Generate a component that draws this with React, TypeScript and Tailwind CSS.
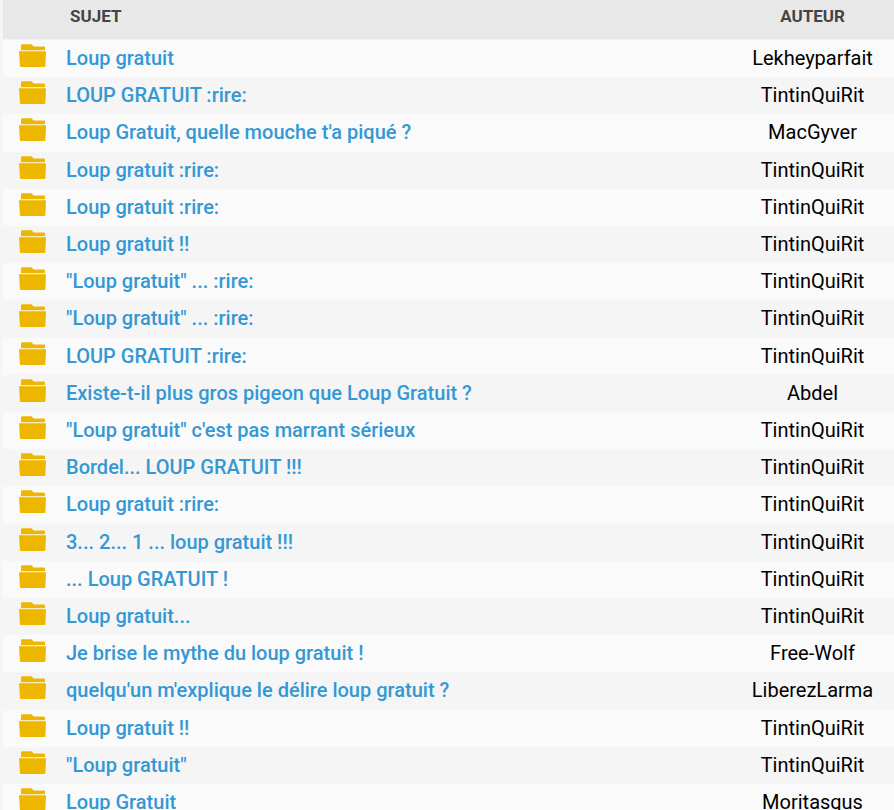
const topics = [
  { title: "Loup gratuit", author: "Lekheyparfait" },
  { title: "LOUP GRATUIT :rire:", author: "TintinQuiRit" },
  { title: "Loup Gratuit, quelle mouche t'a piqué ?", author: "MacGyver" },
  { title: "Loup gratuit :rire:", author: "TintinQuiRit" },
  { title: "Loup gratuit :rire:", author: "TintinQuiRit" },
  { title: "Loup gratuit !!", author: "TintinQuiRit" },
  { title: "\"Loup gratuit\" ... :rire:", author: "TintinQuiRit" },
  { title: "\"Loup gratuit\" ... :rire:", author: "TintinQuiRit" },
  { title: "LOUP GRATUIT :rire:", author: "TintinQuiRit" },
  { title: "Existe-t-il plus gros pigeon que Loup Gratuit ?", author: "Abdel" },
  { title: "\"Loup gratuit\" c'est pas marrant sérieux", author: "TintinQuiRit" },
  { title: "Bordel... LOUP GRATUIT !!!", author: "TintinQuiRit" },
  { title: "Loup gratuit :rire:", author: "TintinQuiRit" },
  { title: "3... 2... 1 ... loup gratuit !!!", author: "TintinQuiRit" },
  { title: "... Loup GRATUIT !", author: "TintinQuiRit" },
  { title: "Loup gratuit...", author: "TintinQuiRit" },
  { title: "Je brise le mythe du loup gratuit !", author: "Free-Wolf" },
  { title: "quelqu'un m'explique le délire loup gratuit ?", author: "LiberezLarma" },
  { title: "Loup gratuit !!", author: "TintinQuiRit" },
  { title: "\"Loup gratuit\"", author: "TintinQuiRit" },
  { title: "Loup Gratuit", author: "Moritasgus" },
];

const FolderIcon = () => (
  <svg width="27" height="24" viewBox="0 0 27 24" className="block" aria-hidden="true">
    <path d="M1 6h25v1.2H1z" fill="#f9ebc0" />
    <path d="M2 6V1.5Q2 .3 3.2 .3H12q.8 0 1.3 .7l1.2 1.4H25q1 0 1 1V6z" fill="#edb700" />
    <path d="M0 7.2h27l-.6 14.6q-.1 1.2-1.3 1.2H2.2Q1 23 .9 21.8z" fill="#edb700" />
  </svg>
);

const App = () => {
  return (
    <main className="min-h-screen bg-[#f5f5f5] pl-[3px] font-['Roboto',sans-serif]">
      <table className="w-full table-fixed border-separate border-spacing-0">
        <colgroup>
          <col className="w-[63px]" />
          <col />
          <col className="w-[163px]" />
        </colgroup>
        <thead>
          <tr className="h-10 bg-[#e8e8e8] text-[17px] leading-5 text-[#444]">
            <th scope="col" aria-label="Statut" className="border-b border-[#f3f3f3]" />
            <th scope="col" className="border-b border-[#f3f3f3] pt-0 pb-2 pl-1 text-left font-bold">SUJET</th>
            <th scope="col" className="border-b border-[#f3f3f3] pt-0 pb-2 text-center font-bold">AUTEUR</th>
          </tr>
        </thead>
        <tbody>
          {topics.map((topic, index) => (
            <tr
              key={index}
              className="h-[37px] text-xl leading-6 odd:bg-[#fafafa] even:bg-[#f5f5f5] nth-[5n+3]:h-[38px]"
            >
              <td className="pt-1 pl-4 align-top">
                <FolderIcon />
              </td>
              <td className="pt-1.5 align-top font-medium whitespace-nowrap">
                <a href="#" className="text-[#3498d4] hover:underline">{topic.title}</a>
              </td>
              <td className="pt-1.5 text-center align-top text-black">{topic.author}</td>
            </tr>
          ))}
        </tbody>
      </table>
    </main>
  );
};

export default App;
